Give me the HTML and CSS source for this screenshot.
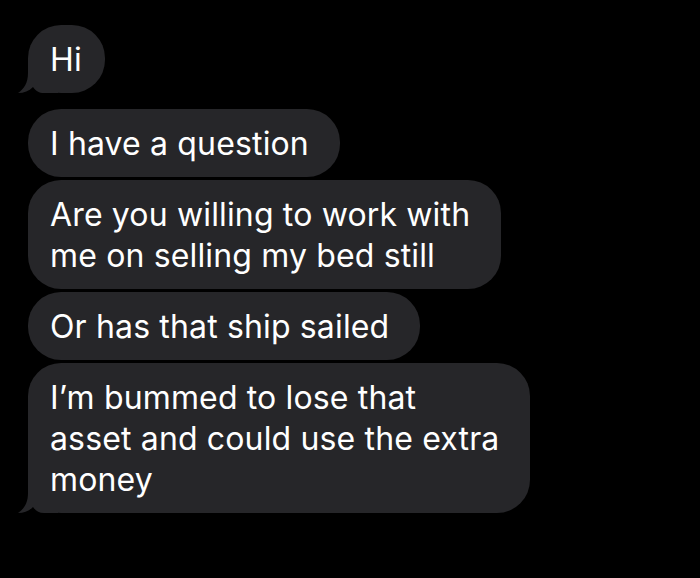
FILE: index.html
```html
<!DOCTYPE html>
<html lang="en">
<head>
<meta charset="utf-8">
<title>Messages</title>
<link rel="stylesheet" href="styles.css">
</head>
<body>
<main class="chat">
  <section class="group">
    <div class="bubble bubble--short has-tail">
      <svg class="tail" width="40" height="34" viewBox="0 0 40 34" aria-hidden="true"><path d="M10 0 L40 0 L40 34 L26 34 C21 34 18 32 15 28 C11 32 6 34 0 34 C6 30 10 24 10 14 Z"/></svg>
      <span class="text">Hi</span>
    </div>
  </section>
  <section class="group">
    <div class="bubble"><span class="text">I have a question</span></div>
    <div class="bubble"><span class="text">Are you willing to work with<br>me on selling my bed still</span></div>
    <div class="bubble"><span class="text">Or has that ship sailed</span></div>
    <div class="bubble has-tail">
      <svg class="tail" width="40" height="34" viewBox="0 0 40 34" aria-hidden="true"><path d="M10 0 L40 0 L40 34 L26 34 C21 34 18 32 15 28 C11 32 6 34 0 34 C6 30 10 24 10 14 Z"/></svg>
      <span class="text">I’m bummed to lose that<br>asset and could use the extra<br>money</span>
    </div>
  </section>
</main>
</body>
</html>
```

FILE: styles.css
```css
html, body {
  margin: 0;
  padding: 0;
  background: #000;
}

body {
  width: 700px;
  height: 578px;
  overflow: hidden;
  font-family: Inter, "Noto Sans", "Liberation Sans", sans-serif;
}

.chat {
  display: flex;
  flex-direction: column;
  gap: 16px;
  padding: 25px 0 0 28px;
}

.group {
  display: flex;
  flex-direction: column;
  align-items: flex-start;
  gap: 3px;
}

.bubble {
  position: relative;
  background: #262629;
  color: #fff;
  font-size: 32px;
  line-height: 41px;
  letter-spacing: 0.15px;
  padding: 14px 31px 13px 22px;
  border-radius: 33px;
  white-space: nowrap;
}

.bubble--short {
  padding-right: 23px;
}

.text {
  position: relative;
  z-index: 1;
}

.tail {
  position: absolute;
  left: -10px;
  bottom: 0;
  fill: #262629;
  display: block;
}
```
